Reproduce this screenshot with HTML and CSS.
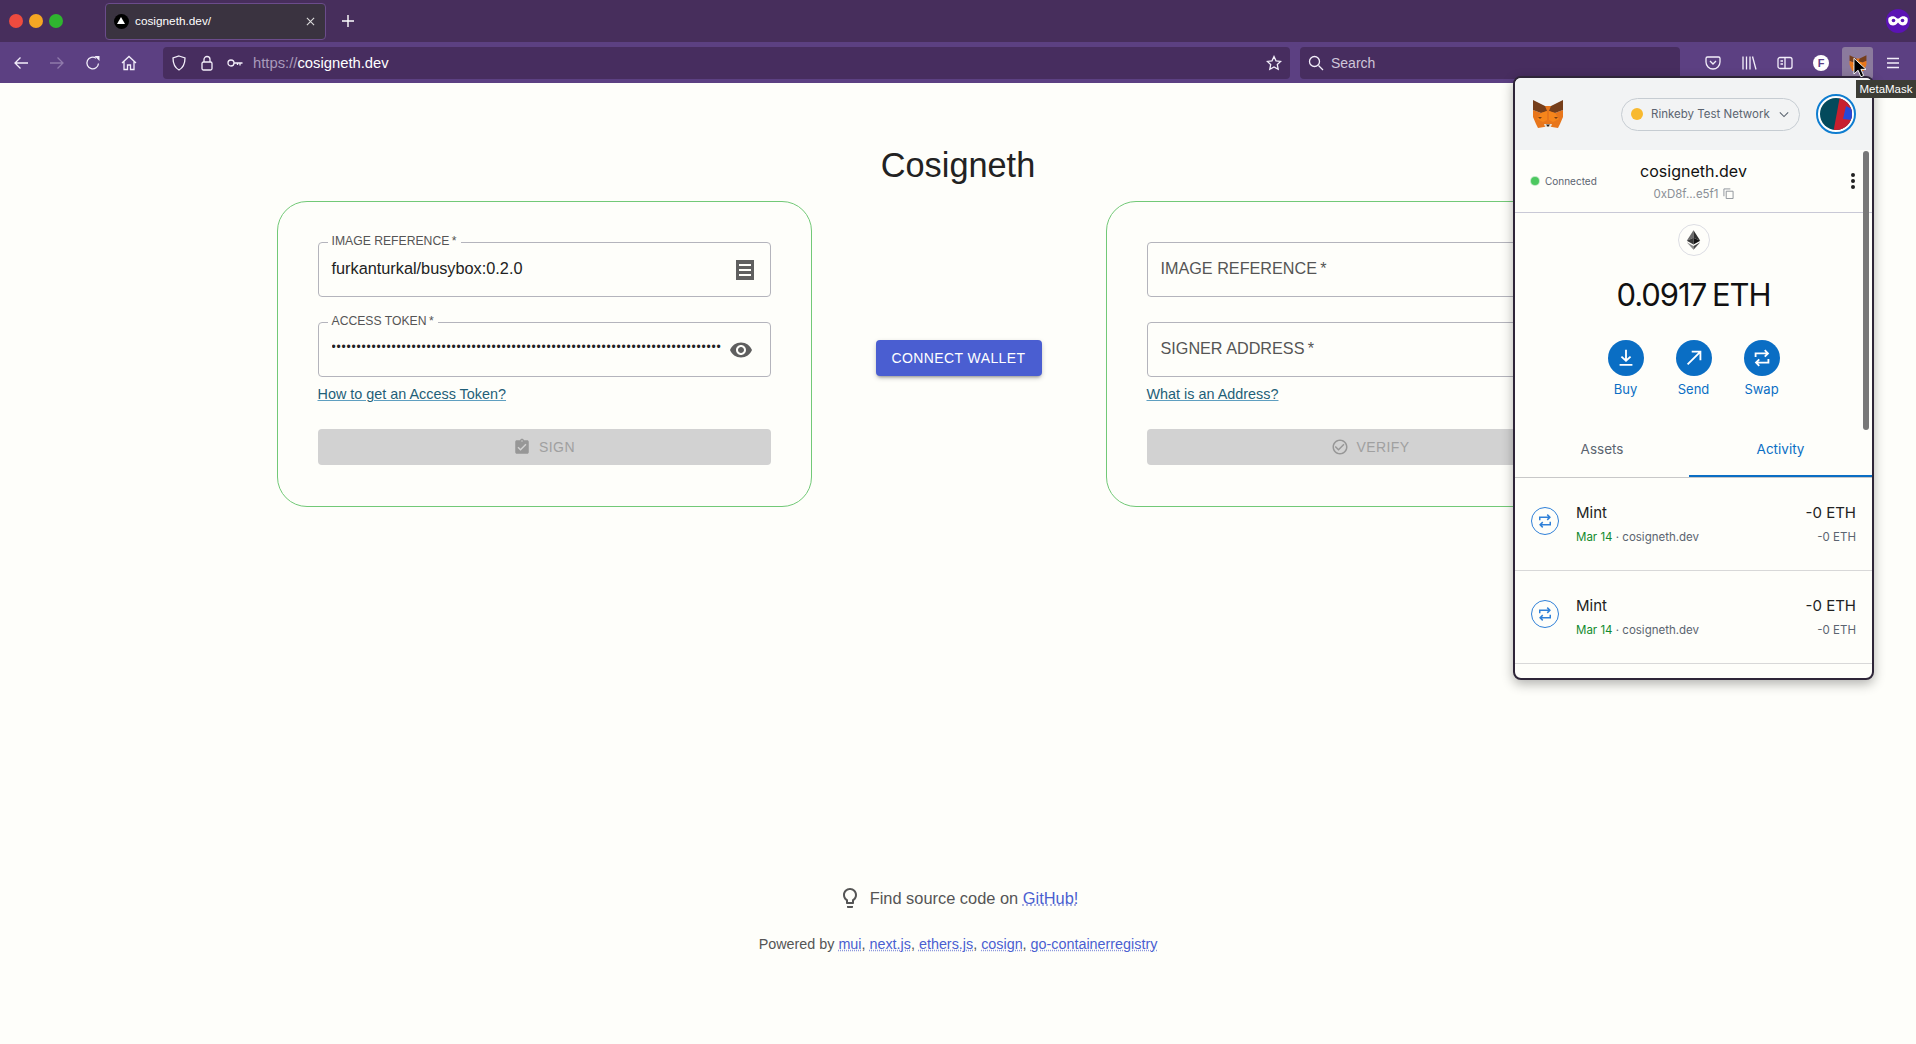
FILE: index.html
```html
<!DOCTYPE html>
<html lang="en">
<head>
    <meta charset="UTF-8">
    <meta name="viewport" content="width=device-width, initial-scale=1.0">
    <title>Cosigneth</title>
    <link rel="stylesheet" href="styles.css">
</head>
<body>
    <svg class="icon-defs" width="0" height="0">
        <symbol id="fox" viewBox="0 0 32 30">
            <polygon points="13,7 19,7 23,14 31,11 31,18 28,25 26,29 20,28 12,28 6,29 4,25 1,18 1,11 9,14" fill="#e8761c"/>
            <polygon points="1,1 13,7 15,12 9,14 1,11" fill="#763e1a"/>
            <polygon points="31,1 19,7 17,12 23,14 31,11" fill="#763e1a"/>
            <polygon points="9,14 15,12 15,21 11,23 5,20" fill="#f6851b"/>
            <polygon points="23,14 17,12 17,21 21,23 27,20" fill="#f6851b"/>
            <polygon points="6,18 10,18 8,20" fill="#7a3e12"/>
            <polygon points="26,18 22,18 24,20" fill="#7a3e12"/>
            <polygon points="12,25 20,25 19,28 13,28" fill="#e8dccf"/>
            <polygon points="14,25.500 18,25.500 16,28" fill="#2a2320"/>
        </symbol>
        <symbol id="swap" viewBox="0 0 24 24">
            <path d="M5 11V7h13.500M15 3.500 18.500 7 15 10.500M19 13v4H5.500M9 13.500 5.500 17 9 20.500" fill="none" stroke="currentColor" stroke-width="2"/>
        </symbol>
    </svg>

    <header class="browser">
        <div class="tabbar">
            <span class="light light-red"></span>
            <span class="light light-yellow"></span>
            <span class="light light-green"></span>
            <div class="tab">
                <span class="favicon"></span>
                <span class="tab-title">cosigneth.dev/</span>
                <svg class="tab-close" viewBox="0 0 10 10"><path d="M1 1l8 8M9 1l-8 8"/></svg>
            </div>
            <svg class="tab-new" viewBox="0 0 12 12"><path d="M6 0v12M0 6h12"/></svg>
            <svg class="mask" viewBox="0 0 24 24">
                <circle cx="12" cy="12" r="12" fill="#5b13b4"/>
                <path d="M2.500 9c2.500-2.500 6-2.500 8 0 .8.800 2.200.800 3 0 2-2.500 5.500-2.500 8 0 1 4-1 7.500-4.500 7.500-2 0-3.500-1-5-3-1.500 2-3 3-5 3-3.500 0-5.500-3.500-4.500-7.500z" fill="#fff"/>
                <circle cx="7.500" cy="11.500" r="1.800" fill="#5b13b4"/>
                <circle cx="16.500" cy="11.500" r="1.800" fill="#5b13b4"/>
            </svg>
        </div>
        <div class="toolbar">
            <button class="tool"><svg viewBox="0 0 16 16"><path d="M15 8H2M7.500 2.500 2 8l5.500 5.500"/></svg></button>
            <button class="tool tool-off"><svg viewBox="0 0 16 16"><path d="M1 8h13M8.500 2.500 14 8l-5.500 5.500"/></svg></button>
            <button class="tool"><svg viewBox="0 0 16 16"><path d="M13.500 8.500A5.800 5.800 0 1 1 11 3.200"/><path class="solid" d="M9.500 1h5v5z"/></svg></button>
            <button class="tool"><svg viewBox="0 0 16 16"><path d="M1 8l7-6.500L15 8M3 6.500V14.500h3.500V10h3v4.500H13V6.500"/></svg></button>

            <div class="urlbar">
                <svg class="url-icon" viewBox="0 0 16 16"><path d="M8 1l6 2c0 6-1.500 9.500-6 12C3.500 12.500 2 9 2 3z"/></svg>
                <svg class="url-icon" viewBox="0 0 16 16"><rect x="3" y="7" width="10" height="8" rx="1.500"/><path d="M5 7V4.500a3 3 0 0 1 6 0V7"/></svg>
                <svg class="url-icon" viewBox="0 0 16 16"><circle cx="4" cy="8" r="3"/><path d="M7 8h8.500M13 8v2.500M10.500 8v2"/></svg>
                <span class="url-text"><span class="url-scheme">https://</span>cosigneth.dev</span>
                <svg class="url-star" viewBox="0 0 16 16"><path d="M8 1.500l2 4.300 4.700.6-3.400 3.200.9 4.700L8 12l-4.200 2.300.9-4.700L1.300 6.400 6 5.800z"/></svg>
            </div>
            <div class="searchbar">
                <svg class="url-icon" viewBox="0 0 16 16"><circle cx="6.500" cy="6.500" r="5"/><path d="M10.500 10.500l4.500 4.500"/></svg>
                <span class="search-text">Search</span>
            </div>

            <div class="tool-group">
                <button class="tool"><svg viewBox="0 0 16 16"><path d="M2.500 2h11A1.500 1.500 0 0 1 15 3.500V7a7 7 0 0 1-14 0V3.500A1.500 1.500 0 0 1 2.500 2zM5 6l3 3 3-3"/></svg></button>
                <button class="tool"><svg viewBox="0 0 16 16"><path d="M2 1.500v13M5.500 1.500v13M9 1.500v13M11.500 1.500l3.500 13"/></svg></button>
                <button class="tool"><svg viewBox="0 0 16 16"><rect x="1" y="2.500" width="14" height="11" rx="2"/><path d="M8 2.500v11M3.500 6h2.500M3.500 9h2.500"/></svg></button>
                <button class="tool"><span class="account">F</span></button>
                <button class="tool tool-active">
                    <svg class="mm-fox"><use href="#fox"/></svg>
                </button>
                <button class="tool"><svg viewBox="0 0 16 16"><path d="M2 3.500h12M2 8h12M2 12.500h12"/></svg></button>
            </div>
        </div>
    </header>

    <main class="page">
        <h1 class="title">Cosigneth</h1>

        <div class="columns">
            <section class="card">
                <div class="field">
                    <span class="field-label">Image Reference&thinsp;*</span>
                    <span class="field-value">furkanturkal/busybox:0.2.0</span>
                    <svg class="field-icon" viewBox="0 0 24 24"><path d="M3 2h18v20H3zM6 6v2h12V6zM6 11v2h12v-2zM6 16v2h12v-2z" fill-rule="evenodd"/></svg>
                </div>
                <div class="field">
                    <span class="field-label">Access Token&thinsp;*</span>
                    <span class="field-dots">••••••••••••••••••••••••••••••••••••••••••••••••••••••••••••••••••••••••••••••</span>
                    <svg class="field-icon field-icon-eye" viewBox="0 0 24 24"><path d="M12 4.500C7 4.500 2.730 7.610 1 12c1.730 4.390 6 7.500 11 7.500s9.270-3.110 11-7.500c-1.730-4.390-6-7.500-11-7.500zM12 17c-2.760 0-5-2.240-5-5s2.240-5 5-5 5 2.240 5 5-2.240 5-5 5zm0-8c-1.660 0-3 1.340-3 3s1.340 3 3 3 3-1.340 3-3-1.340-3-3-3z"/></svg>
                </div>
                <a class="help-link" href="#">How to get an Access Token?</a>
                <button class="action-btn">
                    <svg viewBox="0 0 24 24"><path d="M19 3h-4.180C14.400 1.840 13.300 1 12 1c-1.300 0-2.400.84-2.820 2H5c-1.100 0-2 .9-2 2v14c0 1.100.9 2 2 2h14c1.100 0 2-.9 2-2V5c0-1.100-.9-2-2-2zm-7 0c.55 0 1 .45 1 1s-.45 1-1 1-1-.45-1-1 .45-1 1-1zm-2 14l-4-4 1.410-1.410L10 14.170l6.590-6.590L18 9l-8 8z"/></svg>
                    Sign
                </button>
            </section>

            <button class="connect-btn">Connect Wallet</button>

            <section class="card">
                <div class="field">
                    <span class="field-placeholder">Image Reference&thinsp;*</span>
                </div>
                <div class="field">
                    <span class="field-placeholder">Signer Address&thinsp;*</span>
                </div>
                <a class="help-link" href="#">What is an Address?</a>
                <button class="action-btn action-btn-verify">
                    <svg viewBox="0 0 24 24"><path d="M16.590 7.580 10 14.170l-3.590-3.580L5 12l5 5 8-8zM12 2C6.480 2 2 6.480 2 12s4.480 10 10 10 10-4.480 10-10S17.520 2 12 2zm0 18c-4.420 0-8-3.580-8-8s3.580-8 8-8 8 3.580 8 8-3.580 8-8 8z"/></svg>
                    Verify
                </button>
            </section>
        </div>

        <footer class="footer">
            <p class="footer-source">
                <svg viewBox="0 0 24 24"><path d="M9 21c0 .55.45 1 1 1h4c.55 0 1-.45 1-1v-1H9v1zm3-19C8.140 2 5 5.140 5 9c0 2.380 1.190 4.470 3 5.740V17c0 .55.45 1 1 1h6c.55 0 1-.45 1-1v-2.260c1.810-1.270 3-3.360 3-5.740 0-3.860-3.140-7-7-7zm2.850 11.100-.85.6V16h-4v-2.300l-.85-.6C7.800 12.160 7 10.630 7 9c0-2.760 2.240-5 5-5s5 2.240 5 5c0 1.630-.8 3.160-2.150 4.100z"/></svg>
                <span>Find source code on <a href="#">GitHub!</a></span>
            </p>
            <p class="footer-powered">Powered by <a href="#">mui</a>, <a href="#">next.js</a>, <a href="#">ethers.js</a>, <a href="#">cosign</a>, <a href="#">go-containerregistry</a></p>
        </footer>
    </main>

    <!-- extension popup, sits over the page -->
    <aside class="popup">
        <div class="mm-header">
            <svg class="mm-logo"><use href="#fox"/></svg>
            <div class="network">
                <span class="network-dot"></span>
                <span>Rinkeby Test Network</span>
                <svg class="network-arrow" viewBox="0 0 12 8"><path d="M1 1.500l5 5 5-5"/></svg>
            </div>
            <svg class="avatar" viewBox="0 0 40 40">
                <circle cx="20" cy="20" r="19" fill="#fff" stroke="#0f7dd0" stroke-width="2"/>
                <clipPath id="avatar-clip"><circle cx="20" cy="20" r="16"/></clipPath>
                <g clip-path="url(#avatar-clip)">
                    <rect width="40" height="40" fill="#034a5c"/>
                    <polygon points="24,2 40,4 40,40 17,40" fill="#c8202f"/>
                    <polygon points="30,12 38,16 37,26 27,25" fill="#2448d8"/>
                </g>
            </svg>
        </div>

        <div class="account-row">
            <div class="connected"><span class="connected-dot"></span>Connected</div>
            <div class="account-name">
                <div class="site">cosigneth.dev</div>
                <div class="address">0xD8f...e5f1
                    <svg class="copy" viewBox="0 0 12 12"><path d="M3.500 3.500h7.500v8H3.500zM1 9V1h7"/></svg>
                </div>
            </div>
            <div class="kebab"><span></span><span></span><span></span></div>
        </div>

        <div class="balance">
            <div class="eth-badge">
                <svg viewBox="0 0 20 28">
                    <polygon points="10,1 1,15 10,11" fill="#6b6b6b"/>
                    <polygon points="10,1 19,15 10,11" fill="#2f2f2f"/>
                    <polygon points="1,15 10,11 10,20" fill="#3a3a3a"/>
                    <polygon points="19,15 10,11 10,20" fill="#141414"/>
                    <polygon points="1,17 10,22 10,27" fill="#8a8a8a"/>
                    <polygon points="19,17 10,22 10,27" fill="#4a4a4a"/>
                </svg>
            </div>
            <div class="amount">0.0917 ETH</div>
            <div class="mm-actions">
                <div class="mm-action">
                    <span class="mm-circle"><svg viewBox="0 0 24 24"><path d="M12 3v12M7 10.500 12 15l5-4.500M5 19.500h14"/></svg></span>
                    Buy
                </div>
                <div class="mm-action">
                    <span class="mm-circle"><svg viewBox="0 0 24 24"><path d="M5 19 18.500 5.500M9.500 5H19v9.500"/></svg></span>
                    Send
                </div>
                <div class="mm-action">
                    <span class="mm-circle"><svg><use href="#swap"/></svg></span>
                    Swap
                </div>
            </div>
        </div>

        <div class="mm-tabs">
            <div class="mm-tab mm-tab-assets">Assets</div>
            <div class="mm-tab mm-tab-active">Activity</div>
        </div>

        <div class="tx">
            <span class="tx-icon"><svg><use href="#swap"/></svg></span>
            <div class="tx-main">
                <div class="tx-title">Mint</div>
                <div class="tx-sub"><span class="tx-date">Mar 14</span> · cosigneth.dev</div>
            </div>
            <div class="tx-amount">
                <div class="tx-title">-0 ETH</div>
                <div class="tx-sub">-0 ETH</div>
            </div>
        </div>
        <div class="tx">
            <span class="tx-icon"><svg><use href="#swap"/></svg></span>
            <div class="tx-main">
                <div class="tx-title">Mint</div>
                <div class="tx-sub"><span class="tx-date">Mar 14</span> · cosigneth.dev</div>
            </div>
            <div class="tx-amount">
                <div class="tx-title">-0 ETH</div>
                <div class="tx-sub">-0 ETH</div>
            </div>
        </div>

        <div class="mm-scroll"></div>
    </aside>

    <div class="tooltip">MetaMask</div>
    <svg class="cursor" viewBox="0 0 14 22"><path d="M1 1v17l4.500-4 3 7 3-1.300-3-6.700H14z" fill="#000" stroke="#fff" stroke-width="1"/></svg>
</body>
</html>
```

FILE: styles.css
```css
* {
    box-sizing: border-box;
}

body {
    margin: 0;
    height: 100vh;
    overflow: hidden;
    background-color: #fefefa;
    font-family: "Liberation Sans", Arial, sans-serif;
    color: #222;
}

.icon-defs {
    position: absolute;
}

button {
    font-family: inherit;
    border: none;
    background: none;
    padding: 0;
}

/* browser chrome */
.browser {
    height: 83px;
    color: #fff;
}

.tabbar {
    height: 42px;
    display: flex;
    align-items: center;
    padding: 0 6px 0 9px;
    gap: 6px;
    background-color: #472e5c;
}

.light {
    width: 14px;
    height: 14px;
    border-radius: 50%;
}

.light-red {
    background-color: #ee4b3f;
}

.light-yellow {
    background-color: #f5a623;
}

.light-green {
    background-color: #2fb52f;
}

.tab {
    width: 221px;
    height: 37px;
    margin-left: 36px;
    padding: 0 10px 0 8px;
    display: flex;
    align-items: center;
    gap: 6px;
    border-radius: 4px;
    border: 1px solid #6b4c8c;
    background-color: #3a3340;
}

.favicon {
    width: 15px;
    height: 15px;
    border-radius: 50%;
    background-color: #000;
    position: relative;
}

.favicon::after {
    content: "";
    position: absolute;
    left: 3px;
    top: 3px;
    border-left: 4.5px solid transparent;
    border-right: 4.5px solid transparent;
    border-bottom: 7px solid #fff;
}

.tab-title {
    flex: 1;
    font-size: 11.800px;
}

.tab-close {
    width: 9px;
    height: 9px;
    stroke: #ddd;
    stroke-width: 1.2;
}

.tab-new {
    width: 12px;
    height: 12px;
    margin-left: 10px;
    stroke: #fff;
    stroke-width: 1.400;
}

.mask {
    width: 24px;
    height: 24px;
    margin-left: auto;
}

.toolbar {
    height: 41px;
    display: flex;
    align-items: center;
    padding-left: 3px;
    background-color: #5c4082;
}

.tool {
    width: 36px;
    height: 32px;
    display: flex;
    align-items: center;
    justify-content: center;
    color: #fff;
}

.tool svg,
.url-icon,
.url-star {
    width: 16px;
    height: 16px;
    fill: none;
    stroke: #f3eefa;
    stroke-width: 1.300;
}

.tool .solid {
    fill: #f3eefa;
    stroke: none;
}

.tool-off svg {
    stroke: #8f7aab;
}

.urlbar,
.searchbar {
    height: 32px;
    display: flex;
    align-items: center;
    gap: 12px;
    border-radius: 4px;
    background-color: #472d5f;
    font-size: 14px;
}

.urlbar {
    width: 1127px;
    margin-left: 16px;
    padding: 0 8px;
}

.url-text {
    flex: 1;
    margin-left: -2px;
    font-size: 14.800px;
}

.url-scheme {
    color: #a99abb;
}

.searchbar {
    width: 380px;
    margin-left: 10px;
    padding: 0 8px;
    gap: 7px;
}

.search-text {
    color: #cfc6da;
}

.tool-group {
    display: flex;
    margin-left: 15px;
}

.account {
    width: 16px;
    height: 16px;
    border-radius: 50%;
    background-color: #fff;
    color: #5c3d86;
    font-size: 11px;
    font-weight: bold;
    line-height: 16px;
    text-align: center;
}

.tool-active {
    width: 31px;
    margin: 0 2px 0 3px;
    border-radius: 3px;
    background-color: #8b7a9d;
}

.tool .mm-fox {
    width: 18px;
    height: 18px;
    stroke: none;
}

.tooltip {
    position: absolute;
    left: 1856px;
    top: 80px;
    width: 60px;
    height: 18px;
    background-color: #3c3c35;
    color: #fff;
    font-size: 11.500px;
    line-height: 18px;
    text-align: center;
    white-space: nowrap;
    overflow: hidden;
}

.cursor {
    position: absolute;
    left: 1853px;
    top: 57px;
    width: 13px;
    height: 21px;
}

/* page */
.page {
    padding-top: 62px;
    text-align: center;
}

.title {
    margin: 0 0 16px;
    font-size: 34.300px;
    font-weight: 400;
    line-height: 40px;
    color: #222;
}

.columns {
    display: flex;
    justify-content: center;
    align-items: center;
    gap: 64px;
    padding-left: 1px;
}

.card {
    width: 535px;
    height: 306px;
    flex-shrink: 0;
    padding: 40px;
    border: 1px solid #72c977;
    border-radius: 30px;
    text-align: left;
}

.field {
    position: relative;
    height: 55px;
    margin-bottom: 25px;
    padding: 0 13px;
    display: flex;
    align-items: center;
    justify-content: space-between;
    border: 1px solid #b4b4bc;
    border-radius: 4px;
}

.field-label {
    position: absolute;
    left: 9px;
    top: -9px;
    padding: 0 4px;
    background-color: #fefefa;
    color: #555;
    font-size: 12.200px;
    line-height: 14px;
    text-transform: uppercase;
}

.field-value {
    margin-top: -3px;
    font-size: 16.300px;
    color: #222;
}

.field-placeholder {
    margin-top: -3px;
    font-size: 16.200px;
    color: #555;
    text-transform: uppercase;
}

.field-dots {
    margin-top: -5px;
    font-size: 12px;
    letter-spacing: 0.8px;
    color: #222;
    white-space: nowrap;
    overflow: hidden;
    width: 390px;
}

.field-icon {
    width: 24px;
    height: 24px;
    flex-shrink: 0;
    fill: #5f5f5f;
}

.field-icon-eye {
    margin-right: 4px;
}

.help-link {
    display: block;
    margin-top: -18px;
    font-size: 14.400px;
    line-height: 20px;
    color: #1f5f78;
    text-decoration-color: #5f9fc0;
}

.action-btn {
    width: 100%;
    height: 36px;
    margin-top: 25px;
    display: flex;
    align-items: center;
    justify-content: center;
    gap: 8px;
    border-radius: 4px;
    background-color: #d2d2d2;
    color: #a0a0a0;
    font-size: 14px;
    letter-spacing: 0.4px;
    text-transform: uppercase;
}

.action-btn svg {
    width: 18px;
    height: 18px;
    fill: #979797;
}

.action-btn-verify {
    padding-right: 6px;
}

.connect-btn {
    width: 166px;
    height: 36px;
    flex-shrink: 0;
    margin-top: 8px;
    padding-bottom: 1px;
    border-radius: 4px;
    background-color: #4a5ed1;
    color: #fff;
    font-size: 14px;
    letter-spacing: 0.4px;
    text-transform: uppercase;
    box-shadow: 0 3px 3px -2px rgba(0, 0, 0, 0.3), 0 2px 5px rgba(0, 0, 0, 0.2);
}

.footer {
    margin-top: 379px;
    color: #555;
}

.footer a {
    color: #4a5ed1;
    text-decoration: underline dotted #8d98dd;
}

.footer-source {
    margin: 0;
    display: flex;
    justify-content: center;
    align-items: center;
    gap: 8px;
    font-size: 16.400px;
    line-height: 24px;
}

.footer-source svg {
    width: 24px;
    height: 24px;
    fill: #555;
}

.footer-powered {
    margin: 24px 0 0;
    font-size: 14.350px;
    line-height: 20px;
}

/* metamask popup */
.popup {
    position: absolute;
    left: 1513px;
    top: 76px;
    width: 361px;
    height: 604px;
    overflow: hidden;
    border: 2px solid #2e2538;
    border-radius: 8px;
    background-color: #fefefa;
    box-shadow: 0 4px 12px rgba(0, 0, 0, 0.3);
    font-family: Inter, "Liberation Sans", sans-serif;
}

.mm-header {
    height: 72px;
    display: flex;
    align-items: center;
    gap: 16px;
    padding: 0 16px 0 17px;
    background-color: #f2f3f4;
}

.mm-logo {
    width: 32px;
    height: 30px;
    margin-right: auto;
}

.network {
    width: 179px;
    height: 33px;
    display: flex;
    align-items: center;
    padding: 0 10px 0 9px;
    gap: 8px;
    border: 1px solid #c6ccd2;
    border-radius: 17px;
    color: #5b6470;
    font-size: 11.500px;
}

.network-dot {
    width: 12px;
    height: 12px;
    border-radius: 50%;
    background-color: #f8b92f;
}

.network-arrow {
    width: 10px;
    height: 7px;
    margin-left: auto;
    fill: none;
    stroke: #5b6470;
    stroke-width: 1.300;
}

.avatar {
    width: 40px;
    height: 40px;
}

.account-row {
    height: 63px;
    display: grid;
    grid-template-columns: 1fr auto 1fr;
    align-items: center;
    padding: 0 16px 0 16px;
    border-bottom: 1px solid #c9c9d6;
}

.connected {
    display: flex;
    align-items: center;
    gap: 6px;
    font-size: 10px;
    color: #5b6470;
}

.connected-dot {
    width: 8px;
    height: 8px;
    border-radius: 50%;
    background-color: #4cc85f;
    box-shadow: 0 0 0 1px #bfe9c6;
}

.account-name {
    text-align: center;
}

.site {
    font-size: 16px;
    line-height: 20px;
    color: #111;
}

.address {
    margin-top: 5px;
    display: flex;
    justify-content: center;
    align-items: center;
    gap: 4px;
    font-size: 11.500px;
    line-height: 16px;
    color: #8a8f96;
}

.copy {
    width: 11px;
    height: 11px;
    fill: none;
    stroke: #8a8f96;
    stroke-width: 1;
}

.kebab {
    justify-self: end;
    display: flex;
    flex-direction: column;
    gap: 2px;
    margin-right: 1px;
}

.kebab span {
    width: 4px;
    height: 4px;
    border-radius: 50%;
    background-color: #222;
}

.balance {
    text-align: center;
}

.eth-badge {
    width: 32px;
    height: 32px;
    margin: 11px auto 0;
    display: flex;
    align-items: center;
    justify-content: center;
    border: 1px solid #dcdde3;
    border-radius: 50%;
}

.eth-badge svg {
    width: 15px;
    height: 22px;
}

.amount {
    margin-top: 19px;
    font-size: 31px;
    line-height: 40px;
    color: #111;
    letter-spacing: -1px;
    word-spacing: -2px;
}

.mm-actions {
    margin-top: 25px;
    display: flex;
    justify-content: center;
    gap: 32px;
}

.mm-action {
    width: 36px;
    display: flex;
    flex-direction: column;
    align-items: center;
    gap: 3px;
    color: #0a6ec4;
    font-size: 13px;
    line-height: 20px;
}

.mm-circle {
    width: 36px;
    height: 36px;
    display: flex;
    align-items: center;
    justify-content: center;
    border-radius: 50%;
    background-color: #0a6ec4;
    color: #fff;
}

.mm-circle svg {
    width: 22px;
    height: 22px;
    fill: none;
    stroke: #fff;
    stroke-width: 2;
}

.mm-tabs {
    height: 79px;
    display: flex;
    align-items: flex-end;
    border-bottom: 1px solid #c8c8c8;
}

.mm-tab {
    flex: 1;
    height: 38px;
    text-align: center;
    color: #5b6470;
    font-size: 13.500px;
    line-height: 20px;
}

.mm-tab-assets {
    flex: 0 0 174px;
}

.mm-tab-active {
    color: #0a6ec4;
    border-bottom: 2px solid #0a6ec4;
}

.tx {
    height: 93px;
    display: flex;
    padding: 25px 16px 0;
    border-bottom: 1px solid #d8d8d8;
}

.tx-icon {
    width: 28px;
    height: 28px;
    margin: 4px 17px 0 0;
    display: flex;
    align-items: center;
    justify-content: center;
    border: 1px solid #2f80d8;
    border-radius: 50%;
    color: #2f80d8;
}

.tx-icon svg {
    width: 18px;
    height: 18px;
}

.tx-main {
    flex: 1;
}

.tx-amount {
    text-align: right;
}

.tx-title {
    font-size: 15px;
    line-height: 20px;
    color: #222;
}

.tx-sub {
    margin-top: 6px;
    font-size: 11.500px;
    line-height: 16px;
    color: #5b6470;
}

.tx-date {
    color: #118a2d;
}

.mm-scroll {
    position: absolute;
    right: 3px;
    top: 73px;
    width: 6px;
    height: 279px;
    border-radius: 3px;
    background-color: #787878;
}
```
